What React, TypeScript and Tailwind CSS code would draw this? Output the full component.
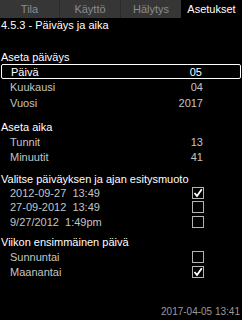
import React from "react";

const font = { fontFamily: '"Liberation Sans", Arial, sans-serif' };

function Check({ on }: { on: boolean }) {
  return (
    <div className="w-[12px] h-[12px] border border-[#b4b4b4] flex items-center justify-center">
      {on && (
        <svg width="10" height="10" viewBox="0 0 10 10">
          <path d="M1.5 5 L4 8 L8.8 1.2" stroke="#ffffff" strokeWidth="1.8" fill="none" />
        </svg>
      )}
    </div>
  );
}

function Row({ label, value, h = 15 }: { label: string; value: string; h?: number }) {
  return (
    <div className={`flex items-center justify-between pl-[10px] pr-[39px] text-[#c4c4c4] ${h === 16 ? "h-[16px]" : "h-[15px]"}`}>
      <span>{label}</span>
      <span>{value}</span>
    </div>
  );
}

function CRow({ label, on }: { label: string; on: boolean }) {
  return (
    <div className="flex items-center justify-between pl-[10px] pr-[38px] h-[14px] text-[#c4c4c4]">
      <span className="whitespace-pre">{label}</span>
      <Check on={on} />
    </div>
  );
}

function Header({ text, cls }: { text: string; cls: string }) {
  return <div className={`pl-[1px] h-[14px] leading-[14px] text-white ${cls}`}>{text}</div>;
}

export default function App() {
  return (
    <div className="w-[242px] h-[320px] bg-black text-[11px] leading-[14px] flex flex-col overflow-hidden" style={font}>
      <div className="h-[18px] grid grid-cols-[60px_61px_60px_61px]">
        <div className="bg-[#363636] text-[#8c8c8c] flex items-center justify-center border-r border-[#2a2a2a]">Tila</div>
        <div className="bg-[#363636] text-[#8c8c8c] flex items-center justify-center border-r border-[#2a2a2a]">Käyttö</div>
        <div className="bg-[#363636] text-[#8c8c8c] flex items-center justify-center">Hälytys</div>
        <div className="bg-black text-white flex items-center justify-center">Asetukset</div>
      </div>
      <div className="h-[14px] pl-[1px] text-white">4.5.3 - Päiväys ja aika</div>
      <Header text="Aseta päiväys" cls="mt-[18px]" />
      <div className="mx-[1px] h-[15px] border border-white rounded-[2px] flex items-center justify-between pl-[9px] pr-[38px] text-white">
        <span>Päivä</span>
        <span>05</span>
      </div>
      <Row label="Kuukausi" value="04" h={16} />
      <Row label="Vuosi" value="2017" />
      <Header text="Aseta aika" cls="mt-[10px]" />
      <Row label="Tunnit" value="13" />
      <Row label="Minuutit" value="41" h={16} />
      <Header text="Valitse päiväyksen ja ajan esitysmuoto" cls="mt-[7px]" />
      <CRow label="2012-09-27  13:49" on={true} />
      <CRow label="27-09-2012  13:49" on={false} />
      <div className="h-[1px]" />
      <CRow label="9/27/2012  1:49pm" on={false} />
      <Header text="Viikon ensimmäinen päivä" cls="mt-[6px]" />
      <div className="h-[1px]" />
      <CRow label="Sunnuntai" on={false} />
      <div className="h-[1px]" />
      <CRow label="Maanantai" on={true} />
      <div className="flex-1" />
      <div className="h-[14px] mb-[1px] pr-[2px] text-right text-[10px] text-[#9a9a9a]">2017-04-05 13:41</div>
    </div>
  );
}
